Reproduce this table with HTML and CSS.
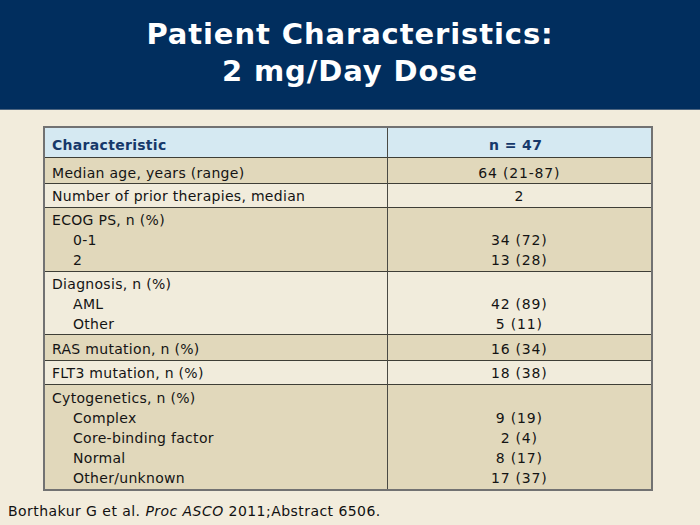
FILE: index.html
```html
<!DOCTYPE html>
<html lang="en">
<head>
<meta charset="utf-8">
<title>Patient Characteristics: 2 mg/Day Dose</title>
<link rel="stylesheet" href="styles.css">
</head>
<body>
<div class="slide">
  <header class="title-bar">
    <h1 class="title">Patient Characteristics:<br>2 mg/Day Dose</h1>
  </header>
  <main class="content">
    <table class="data">
      <thead>
        <tr class="r-head">
          <th class="c-label">Characteristic</th>
          <th class="c-value">n = 47</th>
        </tr>
      </thead>
      <tbody>
        <tr class="tan r-median">
          <td class="c-label">Median age, years (range)</td>
          <td class="c-value">64 (21-87)</td>
        </tr>
        <tr class="light r-one">
          <td class="c-label">Number of prior therapies, median</td>
          <td class="c-value">2</td>
        </tr>
        <tr class="tan r-multi">
          <td class="c-label">ECOG PS, n (%)<div class="sub">0-1</div><div class="sub">2</div></td>
          <td class="c-value"><div>&nbsp;</div><div>34 (72)</div><div>13 (28)</div></td>
        </tr>
        <tr class="light r-diag">
          <td class="c-label">Diagnosis, n (%)<div class="sub">AML</div><div class="sub">Other</div></td>
          <td class="c-value"><div>&nbsp;</div><div>42 (89)</div><div>5 (11)</div></td>
        </tr>
        <tr class="tan r-ras">
          <td class="c-label">RAS mutation, n (%)</td>
          <td class="c-value">16 (34)</td>
        </tr>
        <tr class="light r-one">
          <td class="c-label">FLT3 mutation, n (%)</td>
          <td class="c-value">18 (38)</td>
        </tr>
        <tr class="tan r-cyto">
          <td class="c-label">Cytogenetics, n (%)<div class="sub">Complex</div><div class="sub">Core-binding factor</div><div class="sub">Normal</div><div class="sub">Other/unknown</div></td>
          <td class="c-value"><div>&nbsp;</div><div>9 (19)</div><div>2 (4)</div><div>8 (17)</div><div>17 (37)</div></td>
        </tr>
      </tbody>
    </table>
  </main>
  <footer class="citation">Borthakur G et al. <em>Proc ASCO</em> 2011;Abstract 6506.</footer>
</div>
</body>
</html>
```

FILE: styles.css
```css
* { box-sizing: border-box; }

html, body {
  margin: 0;
  padding: 0;
}

body {
  width: 700px;
  height: 525px;
  background: #f2ecdc;
  font-family: "DejaVu Sans", Verdana, sans-serif;
  color: #141414;
  overflow: hidden;
}

.slide {
  display: flex;
  flex-direction: column;
  height: 525px;
}

.title-bar {
  height: 110px;
  background: #012e5e;
  border-bottom: 1px solid #4d6580;
  display: flex;
  justify-content: center;
}

.title {
  margin: 0;
  padding-top: 16px;
  color: #ffffff;
  font-family: "DejaVu Sans", sans-serif;
  font-weight: bold;
  font-size: 29px;
  letter-spacing: 0.9px;
  line-height: 37px;
  text-align: center;
}

.content {
  padding: 16px 0 0 43px;
}

.data {
  width: 610px;
  border-collapse: collapse;
  border: 2px solid #727272;
  font-size: 14px;
  letter-spacing: 0.3px;
  line-height: 20px;
}

.data th,
.data td {
  vertical-align: top;
  padding: 2px 7px 1px 7px;
  border-top: 1px solid #3e3e36;
}

.c-label {
  width: 343px;
  text-align: left;
  border-right: 1px solid #4a4a44;
}

.c-value {
  text-align: center;
  padding-right: 0;
  letter-spacing: 0.8px;
}

.r-head th {
  background: #d5e9f2;
  color: #16386a;
  font-weight: bold;
  padding-top: 7px;
  padding-bottom: 2px;
}

.r-head .c-value {
  padding-left: 0;
  letter-spacing: 0.4px;
}

.tan td { background: #e1d8bb; }
.light td { background: #f1ecdc; }

.r-median td { padding-top: 5px; padding-bottom: 0; }
.r-diag td { padding-top: 2px; padding-bottom: 0; }
.r-ras td { padding-top: 4px; padding-bottom: 1px; }
.r-cyto td { padding-top: 3px; padding-bottom: 1px; }

.sub {
  padding-left: 21px;
}

.citation {
  margin-top: auto;
  padding: 0 0 4px 8px;
  font-size: 14px;
  letter-spacing: 0.45px;
  line-height: 20px;
  color: #111;
}

.citation em {
  font-style: italic;
}
```
